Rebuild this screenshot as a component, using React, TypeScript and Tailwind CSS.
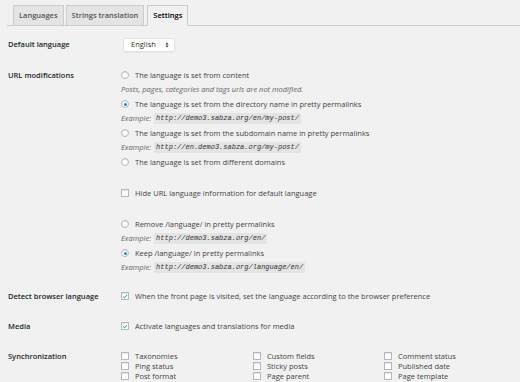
import { ReactNode } from 'react';

const Radio = ({ checked }: { checked?: boolean }) => (
  <span className="mr-[6px] flex h-[8px] w-[8px] shrink-0 items-center justify-center rounded-full border border-[#b4b9be] bg-white shadow-[inset_0_1px_1px_rgba(0,0,0,0.1)]">
    {checked ? <span className="h-[3px] w-[3px] rounded-full bg-[#1e8cbe]" /> : null}
  </span>
);

const Check = ({ checked }: { checked?: boolean }) => (
  <span className="mr-[6px] flex h-[8px] w-[8px] shrink-0 items-center justify-center border border-[#b4b9be] bg-white shadow-[inset_0_1px_1px_rgba(0,0,0,0.1)]">
    {checked ? (
      <svg viewBox="0 0 10 10" className="h-[7px] w-[7px]">
        <path d="M2 5.2 L4.2 7.3 L8.3 2.6" fill="none" stroke="#1e8cbe" strokeWidth="1.6" />
      </svg>
    ) : null}
  </span>
);

const Line = ({ children, className = '' }: { children: ReactNode; className?: string }) => (
  <div className={`flex h-[14.5px] items-center whitespace-nowrap ${className}`}>{children}</div>
);

const Example = ({ url }: { url: string }) => (
  <Line className="italic text-[#666]">
    <span className="mr-[3px]">Example:</span>
    <code className="bg-[#e4e4e4] px-[2px] font-['Liberation_Mono',monospace] text-[7px] leading-[11px] text-[#333]">
      {url}
    </code>
  </Line>
);

const Row = ({ label, children, className = '' }: { label: string; children: ReactNode; className?: string }) => (
  <div className={`flex ${className}`}>
    <div className="w-[113px] shrink-0 font-semibold text-[#23282d]">
      <div className="flex h-[14.5px] items-center">{label}</div>
    </div>
    <div className="flex-1">{children}</div>
  </div>
);

const SyncItem = ({ label }: { label: string }) => (
  <div className="flex h-[10px] items-center whitespace-nowrap leading-[10px]">
    <Check />
    <span>{label}</span>
  </div>
);

export default function App() {
  const tabs = ['Languages', 'Strings translation', 'Settings'];
  const sync = [
    ['Taxonomies', 'Custom fields', 'Comment status'],
    ['Ping status', 'Sticky posts', 'Published date'],
    ['Post format', 'Page parent', 'Page template'],
    ['Menu order', 'Featured image', ''],
  ];

  return (
    <div className="h-[382px] w-[520px] overflow-hidden bg-[#f1f1f1] font-['Open_Sans',sans-serif] text-[7.5px] text-[#444]">
      <div className="ml-[7px] flex border-b border-[#ccc] pl-[6px] pt-[5px]">
        {tabs.map((t, i) => (
          <div
            key={t}
            className={`-mb-px mr-[2px] flex h-[21px] items-center border border-[#ccc] px-[5px] text-[7.5px] font-semibold ${
              i === 2 ? 'ml-[1px] border-b-[#f1f1f1] bg-[#f1f1f1] text-black' : 'bg-[#e4e4e4] text-[#555]'
            }`}
          >
            {t}
          </div>
        ))}
      </div>

      <div className="pl-[8px]">
        <div className="mt-[12px] flex items-center">
          <div className="w-[115px] font-semibold text-[#23282d]">Default language</div>
          <div className="flex h-[14px] w-[52px] items-center justify-between rounded-[2px] border border-[#e2e2e2] bg-white pl-[7px] pr-[5px] text-[#333] shadow-[0_1px_1px_rgba(0,0,0,0.04)]">
            <span>English</span>
            <svg viewBox="0 0 6 10" className="h-[6px] w-[4px]">
              <path d="M0.5 4 L3 1 L5.5 4 Z M0.5 6 L3 9 L5.5 6 Z" fill="#333" />
            </svg>
          </div>
        </div>

        <Row label="URL modifications" className="mt-[16px]">
          <Line><Radio /><span>The language is set from content</span></Line>
          <Line className="italic text-[#666]">Posts, pages, categories and tags urls are not modified.</Line>
          <Line><Radio checked /><span>The language is set from the directory name in pretty permalinks</span></Line>
          <Example url="http://demo3.sabza.org/en/my-post/" />
          <Line><Radio /><span>The language is set from the subdomain name in pretty permalinks</span></Line>
          <Example url="http://en.demo3.sabza.org/my-post/" />
          <Line><Radio /><span>The language is set from different domains</span></Line>
          <Line className="mt-[16.5px]"><Check /><span>Hide URL language information for default language</span></Line>
          <Line className="mt-[16.5px]"><Radio /><span>Remove /language/ in pretty permalinks</span></Line>
          <Example url="http://demo3.sabza.org/en/" />
          <Line><Radio checked /><span>Keep /language/ in pretty permalinks</span></Line>
          <Example url="http://demo3.sabza.org/language/en/" />
        </Row>

        <Row label="Detect browser language" className="mt-[14px]">
          <Line><Check checked /><span>When the front page is visited, set the language according to the browser preference</span></Line>
        </Row>

        <Row label="Media" className="mt-[15.5px]">
          <Line><Check checked /><span>Activate languages and translations for media</span></Line>
        </Row>

        <Row label="Synchronization" className="mt-[15.5px]">
          <div className="grid grid-cols-[132px_131px_1fr] pt-[2px] text-[7.5px]">
            {sync.flat().map((s, i) => (s ? <SyncItem key={i} label={s} /> : <div key={i} />))}
          </div>
        </Row>
      </div>
    </div>
  );
}
